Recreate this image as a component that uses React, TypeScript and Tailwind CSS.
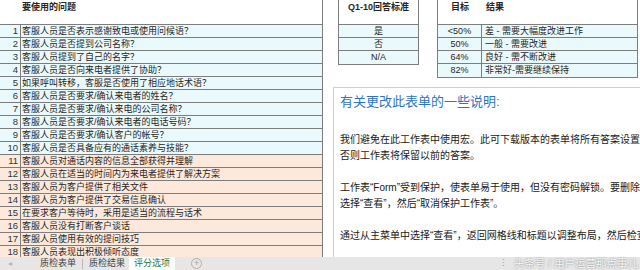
import React from 'react';

const questions = [
  '客服人员是否表示感谢致电或使用问候语？',
  '客服人员是否提到公司名称？',
  '客服人员提到了自己的名字？',
  '客服人员是否向来电者提供了协助？',
  '如果呼叫转移，客服是否使用了相应地话术语？',
  '客服人员是否要求/确认来电者的姓名？',
  '客服人员是否要求/确认来电的公司名称？',
  '客服人员是否要求/确认来电者的电话号码？',
  '客服人员是否要求/确认客户的帐号？',
  '客服人员是否具备应有的通话素养与技能？',
  '客服人员对通话内容的信息全部获得并理解',
  '客服人员在适当的时间内为来电者提供了解决方案',
  '客服人员为客户提供了相关文件',
  '客服人员为客户提供了交易信息确认',
  '在要求客户等待时，采用是适当的流程与话术',
  '客服人员没有打断客户谈话',
  '客服人员使用有效的提问技巧',
  '客服人员表现出积极倾听态度',
];

const answers = ['是', '否', 'N/A'];

const targets = [
  { goal: '<50%', result: '差 - 需要大幅度改进工作' },
  { goal: '50%', result: '一般 - 需要改进' },
  { goal: '64%', result: '良好 - 需不断改进' },
  { goal: '82%', result: '非常好-需要继续保持' },
];

export default function App() {
  return (
    <div className="w-[640px] h-[270px] overflow-hidden bg-white text-[#262626] font-['Liberation_Sans','Noto_Sans_CJK_SC',sans-serif]">
      <div className="flex h-[257px] overflow-hidden">
        {/* Question list */}
        <div className="w-[323px] shrink-0 border-r border-[#7d7d7d]">
          <div className="h-[25px] border-b border-[#7d7d7d] pl-[22px] pt-[1px] text-[9px] font-bold leading-[12px]">
            要使用的问题
          </div>
          {questions.map((q, i) => (
            <div
              key={i}
              className={`flex h-[13px] border-b border-[#7d7d7d] ${i < 10 ? 'bg-[#eaf9fb]' : 'bg-[#fce9dc]'}`}
            >
              <div className="w-[21px] shrink-0 border-r border-[#7d7d7d] pr-[2px] text-right text-[9.5px] leading-[12px] text-[#333]">
                {i + 1}
              </div>
              <div className="pl-[1px] text-[9px] leading-[12px] whitespace-nowrap">{q}</div>
            </div>
          ))}
        </div>

        {/* Right side */}
        <div className="flex-1 min-w-0">
          <div className="flex items-start">
            {/* Q1-10 answer standard */}
            <div className="ml-[15px] w-[81px] border-x border-b border-[#7d7d7d] text-[9px]">
              <div className="h-[25px] border-b border-[#7d7d7d] pt-[1px] text-center font-bold leading-[12px]">
                Q1-10回答标准
              </div>
              {answers.map((a, i) => (
                <div
                  key={a}
                  className={`h-[13px] bg-[#eaf9fb] text-center leading-[12px] ${i < answers.length - 1 ? 'border-b border-[#7d7d7d]' : ''}`}
                >
                  {a}
                </div>
              ))}
            </div>

            {/* Targets */}
            <div className="ml-[18px] w-[201px] border-x border-b border-[#7d7d7d] text-[9px]">
              <div className="flex h-[25px] border-b border-[#7d7d7d] pt-[1px] font-bold leading-[12px]">
                <div className="w-[44px] text-center">目标</div>
                <div className="pl-[4px]">结果</div>
              </div>
              {targets.map((t, i) => (
                <div
                  key={t.goal}
                  className={`flex h-[13px] bg-[#eaf9fb] leading-[12px] ${i < targets.length - 1 ? 'border-b border-[#7d7d7d]' : ''}`}
                >
                  <div className="w-[44px] shrink-0 border-r border-[#7d7d7d] text-center">{t.goal}</div>
                  <div className="pl-[3px] whitespace-nowrap">{t.result}</div>
                </div>
              ))}
            </div>
          </div>

          {/* Instructions */}
          <div className="ml-[10px] mt-[9px] h-[200px] border-l border-t border-[#cfcfcf] bg-white pl-[6px] pt-[6px] overflow-hidden whitespace-nowrap">
            <div className="text-[13px] leading-[16px] text-[#2e74c4]">有关更改此表单的一些说明:</div>
            <div className="mt-[22px] text-[10px] leading-[16px] text-[#1a1a1a]">
              <div>我们避免在此工作表中使用宏。此可下载版本的表单将所有答案设置为“是”，</div>
              <div>否则工作表将保留以前的答案。</div>
              <div className="h-[16px]" />
              <div>工作表“Form”受到保护，使表单易于使用，但没有密码解锁。要删除保护，</div>
              <div>选择“查看”，然后“取消保护工作表”。</div>
              <div className="h-[16px]" />
              <div>通过从主菜单中选择“查看”，返回网格线和标题以调整布局，然后检查公式。</div>
            </div>
          </div>
        </div>
      </div>

      {/* Sheet tabs / status bar */}
      <div className="flex h-[13px] items-center bg-[#e6e6e6] text-[9px] leading-[13px]">
        <div className="w-[37px] shrink-0 pl-[8px] text-[8px] text-[#b5b5b5]">◂</div>
        <div className="px-[3px] text-[#444]">质检表单</div>
        <div className="mx-[3px] h-[10px] w-px bg-[#b8b8b8]" />
        <div className="px-[3px] text-[#444]">质检结果</div>
        <div className="ml-[1px] h-[13px] bg-white px-[5px] text-[#217346]">评分选项</div>
        <div className="ml-[16px] flex h-[11px] w-[11px] items-center justify-center rounded-full border border-[#b0b0b0] text-[9px] leading-none text-[#a0a0a0]">
          +
        </div>
        <div className="ml-auto mr-[6px] text-[#9a9a9a]">⋮</div>
        <div className="pr-[2px] text-[10.5px] text-[#f7f7f7] [text-shadow:0_0_2px_#777]">头条号 / 用户运营那点事儿</div>
      </div>
    </div>
  );
}
